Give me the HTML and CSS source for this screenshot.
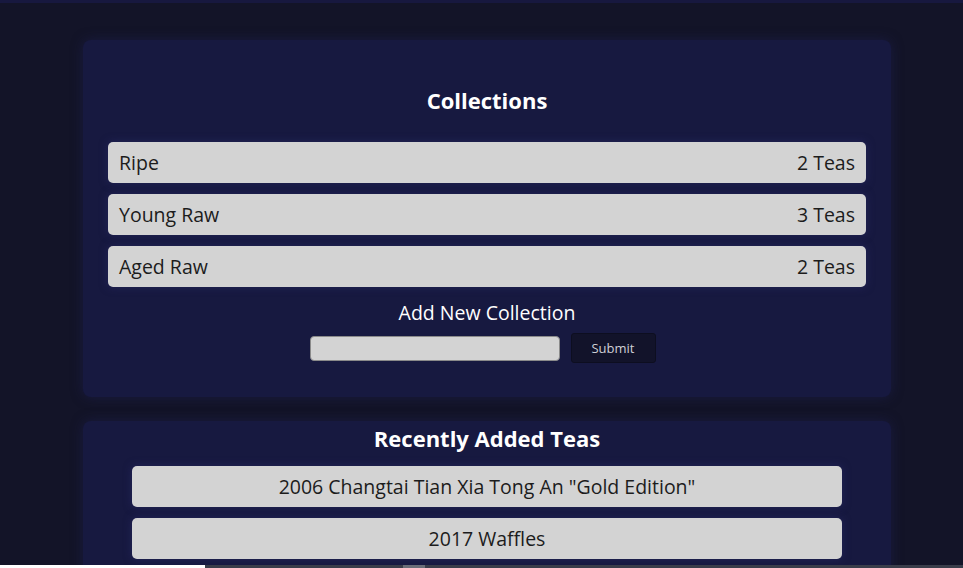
FILE: index.html
```html
<!DOCTYPE html>
<html lang="en">
<head>
<meta charset="utf-8">
<title>Tea Collections</title>
<link rel="stylesheet" href="styles.css">
</head>
<body>
<div class="topbar"></div>
<main class="page">
  <section class="card card-collections">
    <h2 class="card-title">Collections</h2>
    <ul class="list">
      <li class="row"><span>Ripe</span><span>2 Teas</span></li>
      <li class="row"><span>Young Raw</span><span>3 Teas</span></li>
      <li class="row"><span>Aged Raw</span><span>2 Teas</span></li>
    </ul>
    <form class="add-form">
      <label class="add-label" for="newcol">Add New Collection</label>
      <div class="add-row">
        <input id="newcol" class="add-input" type="text">
        <button class="add-btn" type="button">Submit</button>
      </div>
    </form>
  </section>
  <section class="card card-recent">
    <h2 class="card-title recent-title">Recently Added Teas</h2>
    <ul class="list recent-list">
      <li class="row row-center">2006 Changtai Tian Xia Tong An "Gold Edition"</li>
      <li class="row row-center">2017 Waffles</li>
    </ul>
  </section>
</main>
<div class="hscroll"><div class="hscroll-left"></div><div class="hscroll-thumb"></div></div>
</body>
</html>
```

FILE: styles.css
```css
* { box-sizing: border-box; }
html, body { margin: 0; padding: 0; }
body {
  background: #131428;
  font-family: "Open Sans", "Noto Sans", sans-serif;
  color: #fff;
  height: 568px;
  overflow: hidden;
}
.topbar { height: 3px; background: #17183f; }
.page {
  width: 808px;
  margin-left: 83px;
  padding-top: 37px;
  display: flex;
  flex-direction: column;
  gap: 24px;
}
.card {
  background: #171940;
  border-radius: 8px;
  box-shadow: 0 0 12px rgba(30, 32, 80, 0.6);
}
.card-collections { padding: 46px 25px 34px; }
.card-title {
  margin: 0;
  text-align: center;
  font-size: 22px;
  font-weight: 700;
  line-height: 28px;
  color: #fff;
}
.list {
  list-style: none;
  margin: 28px 0 0;
  padding: 0;
  display: flex;
  flex-direction: column;
  gap: 11px;
}
.row {
  height: 41px;
  background: #d3d3d3;
  border-radius: 5px;
  color: #1c1c1c;
  font-size: 19.5px;
  font-weight: 400;
  display: flex;
  align-items: center;
  justify-content: space-between;
  padding: 0 11px;
  box-shadow: 0 0 8px rgba(40, 42, 100, 0.7);
}
.row-center { justify-content: center; }
.add-form {
  margin-top: 15px;
  display: flex;
  flex-direction: column;
  align-items: center;
}
.add-label {
  font-size: 19.5px;
  font-weight: 400;
  line-height: 22px;
  color: #fff;
}
.add-row {
  margin-top: 9px;
  padding-right: 9px;
  display: flex;
  align-items: center;
  gap: 11px;
}
.add-input {
  width: 250px;
  height: 25px;
  background: #d3d3d3;
  border: 1px solid #8a8a8a;
  border-radius: 4px;
  padding: 0;
}
.add-btn {
  width: 85px;
  height: 30px;
  background: #12132a;
  border: 1px solid #0d0e20;
  border-radius: 3px;
  color: #cfcfd6;
  font-family: "Open Sans", sans-serif;
  font-size: 13px;
}
.card-recent { padding: 3px 49px 20px; }
.recent-title { margin: 0; }
.recent-list { margin-top: 14px; }
.hscroll {
  position: fixed;
  left: 0;
  right: 0;
  bottom: 0;
  height: 3px;
  background: #3a3d4a;
  display: flex;
}
.hscroll-left { width: 205px; background: #ffffff; }
.hscroll-thumb { width: 22px; margin-left: 198px; background: #6a6d78; }
```
